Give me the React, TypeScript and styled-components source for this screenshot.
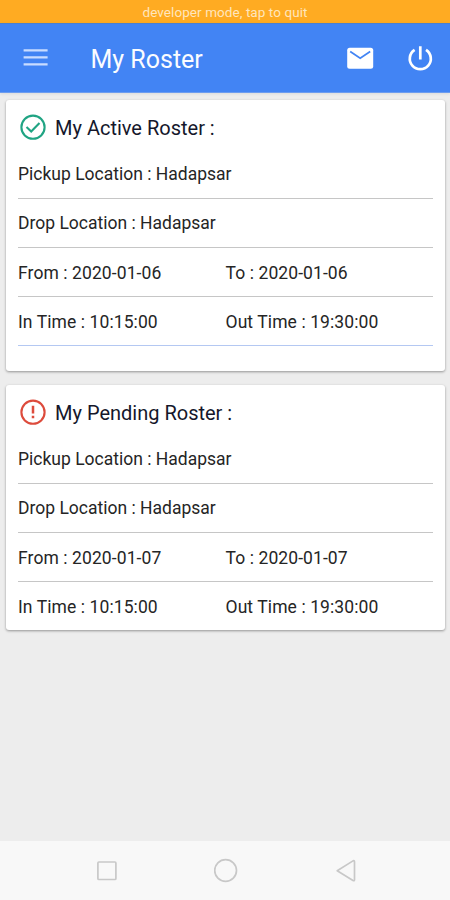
import React from "react";
import styled, { createGlobalStyle } from "styled-components";

const GlobalStyle = createGlobalStyle`
  * { box-sizing: border-box; }
  body { margin: 0; background: #ededed; font-family: Roboto, "Liberation Sans", sans-serif; }
`;

const Screen = styled.div`
  width: 450px;
  height: 900px;
  display: flex;
  flex-direction: column;
  background: #ededed;
  overflow: hidden;
`;

const DevBanner = styled.div`
  height: 23px;
  flex: none;
  padding-top: 4px;
  background: #ffab22;
  color: #ffe6bd;
  font-size: 13.5px;
  line-height: 17px;
  letter-spacing: 0.07px;
  text-align: center;
  white-space: nowrap;
`;

const AppBar = styled.header`
  height: 70px;
  flex: none;
  display: flex;
  align-items: center;
  padding: 0 16px 0 21px;
  background: #4284f4;
  border-top: 1px solid #4a80cf;
  border-bottom: 1px solid #6c9cef;
  box-shadow: 0 1px 3px rgba(0, 0, 0, 0.08);
`;

const IconButton = styled.button`
  display: flex;
  flex: none;
  padding: 0;
  border: 0;
  background: none;
  color: #fff;
`;

const Title = styled.h1`
  flex: 1;
  margin: 4px 0 0 41.5px;
  color: #fafcff;
  font-size: 25px;
  font-weight: 400;
  line-height: 30px;
`;

const Actions = styled.div`
  display: flex;
  align-items: center;
  gap: 32px;
`;

const Content = styled.main`
  flex: 1;
  display: flex;
  flex-direction: column;
  gap: 14px;
  padding: 7px 5px 0 6px;
`;

const Card = styled.section<{ $height: number }>`
  height: ${(p) => p.$height}px;
  flex: none;
  padding: 0 12px;
  background: #fff;
  border-radius: 3px;
  box-shadow: 0 1px 3px rgba(0, 0, 0, 0.28), 0 1px 2px rgba(0, 0, 0, 0.12);
`;

const CardHeader = styled.div`
  height: 49.9px;
  display: flex;
  align-items: center;
  gap: 8px;
  padding: 5px 0 0 1px;
`;

const CardTitle = styled.h2`
  margin: 1px 0 0;
  color: #15172b;
  font-size: 20px;
  font-weight: 400;
  line-height: 24px;
`;

const Row = styled.div<{ $line: string; $split?: boolean }>`
  height: 49.15px;
  display: grid;
  grid-template-columns: 1fr 1fr;
  align-items: center;
  padding-top: ${(p) => (p.$split ? 1.5 : 0)}px;
  border-bottom: 1px solid ${(p) => p.$line};
  color: #252525;
  font-size: 17.5px;
  line-height: 20px;
  letter-spacing: ${(p) => (p.$split ? 0.09 : 0)}px;
  white-space: nowrap;
`;

const NavBar = styled.nav`
  height: 59px;
  flex: none;
  display: flex;
  justify-content: space-between;
  align-items: center;
  padding: 0 92px 0 95px;
  background: #f8f8f8;
`;

const MenuIcon = () => (
  <svg width="28" height="24" viewBox="0 0 28 24" fill="none" stroke="#c9dcff" strokeWidth="2.3">
    <path d="M2.6 4.4H26.6M2.6 11.4H26.6M2.6 18.4H26.6" />
  </svg>
);

const MailIcon = () => (
  <svg width="28" height="24" viewBox="0 0 28 24">
    <rect x="1.2" y="1.8" width="26" height="21" rx="2.5" fill="#fff" />
    <path d="M4.2 5.5L14.2 12.3L24.2 5.5" fill="none" stroke="#4284f4" strokeWidth="1.7" />
  </svg>
);

const PowerIcon = () => (
  <svg width="28" height="28" viewBox="0 0 28 28" fill="none" stroke="#fff" strokeWidth="2.7">
    <path d="M14.3 2.3V15.5M8.6 5.9A10.5 10.5 0 1 0 20 5.9" />
  </svg>
);

const ActiveIcon = () => (
  <svg width="28" height="28" viewBox="0 0 28 28" fill="none" stroke="#20a483" strokeWidth="2.1">
    <circle cx="14" cy="14.2" r="11.6" />
    <path d="M7.5 14L12.2 18.5L20.5 10" />
  </svg>
);

const PendingIcon = () => (
  <svg width="28" height="28" viewBox="0 0 28 28" fill="none" stroke="#dd4b3c" strokeWidth="2.1">
    <circle cx="14" cy="14.2" r="11.6" />
    <path d="M14 7.7V15.5M14 17.8V20.2" strokeWidth="2.5" />
  </svg>
);

type Roster = {
  title: string;
  icon: React.ReactNode;
  height: number;
  date: string;
  closingLine: string;
};

const rosters: Roster[] = [
  { title: "My Active Roster :", icon: <ActiveIcon />, height: 271, date: "2020-01-06", closingLine: "#b4c8f2" },
  { title: "My Pending Roster :", icon: <PendingIcon />, height: 245, date: "2020-01-07", closingLine: "transparent" },
];

const LINE = "#c6c6c6";

const RosterCard = ({ title, icon, height, date, closingLine }: Roster) => (
  <Card $height={height}>
    <CardHeader>
      {icon}
      <CardTitle>{title}</CardTitle>
    </CardHeader>
    <Row $line={LINE}>
      <span>Pickup Location : Hadapsar</span>
    </Row>
    <Row $line={LINE}>
      <span>Drop Location : Hadapsar</span>
    </Row>
    <Row $line={LINE} $split>
      <span>From : {date}</span>
      <span>To : {date}</span>
    </Row>
    <Row $line={closingLine} $split>
      <span>In Time : 10:15:00</span>
      <span>Out Time : 19:30:00</span>
    </Row>
  </Card>
);

export default function App() {
  return (
    <Screen>
      <GlobalStyle />
      <DevBanner>developer mode, tap to quit</DevBanner>
      <AppBar>
        <IconButton aria-label="Menu"><MenuIcon /></IconButton>
        <Title>My Roster</Title>
        <Actions>
          <IconButton aria-label="Messages"><MailIcon /></IconButton>
          <IconButton aria-label="Log out"><PowerIcon /></IconButton>
        </Actions>
      </AppBar>
      <Content>
        {rosters.map((r) => (
          <RosterCard key={r.title} {...r} />
        ))}
      </Content>
      <NavBar>
        <svg width="24" height="24" viewBox="0 0 24 24" fill="none" stroke="#c8c8c8" strokeWidth="1.7">
          <rect x="2.9" y="3" width="18" height="17.5" rx="1" />
        </svg>
        <svg width="26" height="26" viewBox="0 0 26 26" fill="none" stroke="#c8c8c8" strokeWidth="1.7">
          <circle cx="11.6" cy="12.5" r="10.9" />
        </svg>
        <svg width="24" height="26" viewBox="0 0 24 26" fill="none" stroke="#c8c8c8" strokeWidth="1.7" strokeLinejoin="round">
          <path d="M3.2 12.7L19 2.9Q20.5 2.3 20.5 3.7V21.7Q20.5 23.2 19 22.5Z" />
        </svg>
      </NavBar>
    </Screen>
  );
}
